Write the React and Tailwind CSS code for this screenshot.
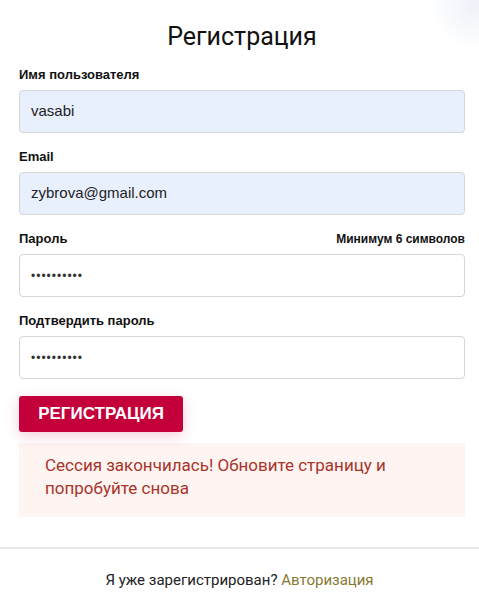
export default function App() {
  const fields = [
    { label: "Имя пользователя", value: "vasabi", filled: true },
    { label: "Email", value: "zybrova@gmail.com", filled: true },
    { label: "Пароль", value: "••••••••••", hint: "Минимум 6 символов", pw: true },
    { label: "Подтвердить пароль", value: "••••••••••", pw: true },
  ];

  return (
    <div className="relative w-[479px] h-[600px] bg-white overflow-hidden font-['Roboto',sans-serif] text-[#111]">
      <div className="absolute -top-[40px] -right-[40px] w-[90px] h-[90px] rounded-full bg-[radial-gradient(circle,rgba(230,236,245,0.7),rgba(255,255,255,0)_70%)]" />
      <div className="pl-[19px] pr-[14px] pt-[20px]">
        <h1 className="text-center text-[25px] leading-[34px] font-normal text-[#111]">Регистрация</h1>
        <form className="mt-[8px]">
          {fields.map((f) => (
            <div key={f.label} className="mb-[11px]">
              <div className="flex justify-between items-end h-[22px] mb-[6px]">
                <label className="text-[13px] font-semibold font-['Liberation_Sans',Arial,sans-serif] text-[#111]">{f.label}</label>
                {f.hint && (
                  <span className="text-[12px] font-semibold font-['Liberation_Sans',Arial,sans-serif] text-[#111]">{f.hint}</span>
                )}
              </div>
              <div
                className={
                  "h-[43px] rounded-[4px] border border-[#d6d6d6] flex items-center px-[11px] " +
                  (f.filled ? "bg-[#e8f0fe]" : "bg-white")
                }
              >
                <span
                  className={
                    f.pw
                      ? "text-[12px] tracking-[1px] font-['Liberation_Sans',Arial,sans-serif] text-[#333]"
                      : "text-[15px] font-['Liberation_Sans',Arial,sans-serif] text-[#222]"
                  }
                >
                  {f.value}
                </span>
              </div>
            </div>
          ))}
          <button
            type="button"
            className="mt-[6px] h-[36px] w-[164px] rounded-[3px] bg-[#c4003a] text-white text-[17px] font-bold font-['Liberation_Sans',Arial,sans-serif] shadow-[0_4px_14px_rgba(196,0,58,0.2)]"
          >
            РЕГИСТРАЦИЯ
          </button>
        </form>
        <div className="mt-[11px] bg-[#fef4f2] px-[26px] pt-[11px] pb-[17px] text-[17px] leading-[23px] text-[#a8352b]">
          Сессия закончилась! Обновите страницу и попробуйте снова
        </div>
      </div>
      <div className="mt-[30px] border-t-2 border-[#e6e6e6]" />
      <p className="mt-[20px] text-center text-[15px] text-[#222]">
        Я уже зарегистрирован? <a className="text-[#86792f]">Авторизация</a>
      </p>
    </div>
  );
}
